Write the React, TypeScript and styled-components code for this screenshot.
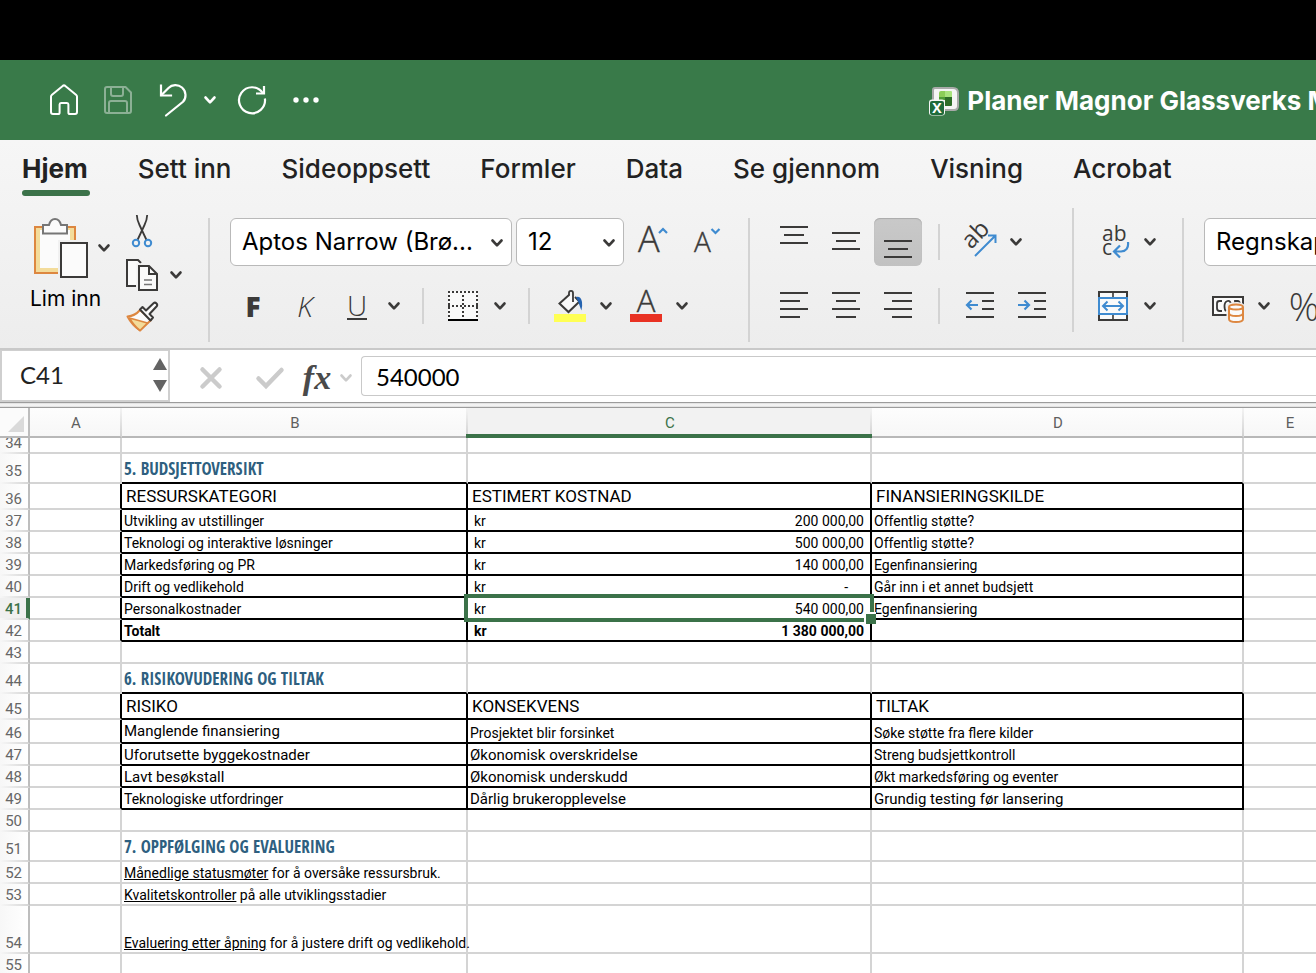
import React from "react";
import styled, { createGlobalStyle, css } from "styled-components";

const ink = "#3b3a39";
const blue = "#3f8bd0";
const orange = "#dd8740";
const green = "#3b7249";
const ui = `Inter, "Liberation Sans", sans-serif`;
const cellFont = `Roboto, "Liberation Sans", sans-serif`;

const GlobalStyle = createGlobalStyle`
  *, *::before, *::after { box-sizing: border-box; }
  body { margin: 0; background: #fff; font-family: ${ui}; color: #222; }
  button { border: 0; padding: 0; background: none; font: inherit; color: inherit; }
`;

/* ---------- window frame ---------- */

const AppWindow = styled.div`
  display: flex;
  flex-direction: column;
  height: 100vh;
  overflow: hidden;
  border-top: 60px solid #000;
`;

const TitleBar = styled.header`
  display: flex;
  flex: none;
  align-items: center;
  height: 80px;
  background: #397a49;
  color: #fff;
  overflow: hidden;
`;

const QuickAccess = styled.div`
  display: flex;
  flex: none;
  padding-left: 36px;
`;

const DocumentTitle = styled.h1`
  display: flex;
  flex: none;
  align-items: center;
  gap: 8px;
  margin: 0;
  padding: 2px 0 0 46vw;
  font-size: 26px;
  line-height: 40px;
  font-weight: 700;
  white-space: nowrap;
  svg { display: block; overflow: visible; }
`;

const IconButton = styled.button<{ $w: number; $active?: boolean }>`
  display: flex;
  flex: none;
  align-items: center;
  justify-content: center;
  width: ${(p) => p.$w}px;
  height: 48px;
  border-radius: 6px;
  svg { display: block; overflow: visible; }
  ${(p) =>
    p.$active &&
    css`
      background: linear-gradient(#c9c9c9, #c1c1c1);
      box-shadow: inset 0 1px 1px #aaa;
    `}
`;

/* ---------- ribbon ---------- */

const Ribbon = styled.div`
  flex: none;
  background: linear-gradient(#f6f6f6, #ededed);
  border-bottom: 2px solid #c9c9c9;
`;

const Tabs = styled.nav`
  display: flex;
  gap: 50px;
  padding: 13px 22px 0;
`;

const Tab = styled.button<{ $active?: boolean }>`
  padding-bottom: 5px;
  border-bottom: 6px solid transparent;
  font-size: 26px;
  line-height: 32px;
  font-weight: ${(p) => (p.$active ? 700 : 500)};
  white-space: nowrap;
  position: relative;
  &::after {
    content: "";
    position: absolute;
    left: 0;
    right: -2px;
    bottom: -6px;
    height: 6px;
    border-radius: 3px;
    background: ${(p) => (p.$active ? green : "transparent")};
  }
`;

const Tools = styled.div`
  display: flex;
  height: 152px;
  padding: 12px 0 6px;
  overflow: hidden;
`;

const Divider = styled.span<{ $top?: boolean }>`
  flex: none;
  align-self: ${(p) => (p.$top ? "flex-start" : "flex-end")};
  width: 2px;
  height: 124px;
  background: #d3d3d3;
`;

const ShortDivider = styled.span<{ $w: number }>`
  display: flex;
  flex: none;
  justify-content: center;
  width: ${(p) => p.$w}px;
  &::before {
    content: "";
    width: 2px;
    height: 36px;
    background: #d3d3d3;
  }
`;

const Clipboard = styled.div`
  display: flex;
  flex: none;
  gap: 16px;
  width: 208px;
  padding-left: 30px;
`;

const PasteColumn = styled.div`
  display: flex;
  flex-direction: column;
  gap: 6px;
  width: 80px;
  padding-top: 10px;
`;

const PasteRow = styled.div`
  display: flex;
  align-items: center;
  gap: 10px;
  padding-left: 4px;
  svg { display: block; overflow: visible; }
`;

const PasteLabel = styled.span`
  font-size: 21px;
  line-height: 30px;
  color: #000;
  white-space: nowrap;
`;

const SmallColumn = styled.div`
  display: flex;
  flex-direction: column;
  justify-content: center;
  gap: 11px;
`;

const SmallRow = styled.div`
  display: flex;
  align-items: center;
  gap: 12px;
  svg { display: block; overflow: visible; }
`;

const Group = styled.div<{ $w: number; $left: number }>`
  display: flex;
  flex: none;
  flex-direction: column;
  gap: 16px;
  width: ${(p) => p.$w}px;
  padding: 10px 0 0 ${(p) => p.$left}px;
`;

const ToolRow = styled.div<{ $gap?: number }>`
  display: flex;
  align-items: center;
  gap: ${(p) => p.$gap ?? 0}px;
  height: 48px;
`;

const Picker = styled.label<{ $w: number }>`
  position: relative;
  display: flex;
  flex: none;
  width: ${(p) => p.$w}px;
  svg {
    position: absolute;
    right: 9px;
    top: 21px;
    pointer-events: none;
  }
`;

const Select = styled.select`
  appearance: none;
  width: 100%;
  height: 48px;
  padding: 0 11px 2px;
  border: 1px solid #b9b9b9;
  border-radius: 6px;
  background: #fff;
  color: #000;
  font-family: ${ui};
  font-size: 24px;
`;

const Letter = styled.span<{ $kind: "bold" | "italic" | "underline" | "percent" }>`
  font-family: "Open Sans", sans-serif;
  font-size: 28px;
  line-height: 32px;
  font-weight: 300;
  color: ${ink};
  ${(p) => p.$kind === "bold" && css`font-weight: 800;`}
  ${(p) => p.$kind === "italic" && css`font-style: italic;`}
  ${(p) =>
    p.$kind === "underline" &&
    css`
      line-height: 26px;
      border-bottom: 2px solid ${ink};
    `}
  ${(p) => p.$kind === "percent" && css`font-size: 38px;`}
`;

/* ---------- formula bar ---------- */

const FormulaBar = styled.div`
  display: flex;
  flex: none;
  align-items: center;
  height: 52px;
  background: #fff;
`;

const NameBox = styled.div`
  display: flex;
  flex: none;
  align-items: center;
  width: 170px;
  height: 52px;
  padding-bottom: 2px;
  border: 2px solid #cfcfcf;
  border-top-width: 1px;
`;

const NameInput = styled.input`
  flex: 1;
  min-width: 0;
  height: 44px;
  padding: 0 0 0 18px;
  border: 0;
  background: none;
  font-family: Lato, sans-serif;
  font-size: 24px;
  color: #222;
`;

const Stepper = styled.div`
  display: flex;
  flex: none;
  flex-direction: column;
  gap: 10px;
  padding-right: 1px;
  svg { display: block; }
`;

const FormulaTools = styled.div`
  display: flex;
  flex: none;
  padding: 4px 3px 0 12px;
`;

const Fx = styled.span`
  font-family: "Liberation Serif", serif;
  font-style: italic;
  font-weight: 700;
  font-size: 34px;
  line-height: 36px;
  color: #4a4a4a;
`;

const FormulaInput = styled.input`
  flex: 1;
  min-width: 0;
  height: 40px;
  padding: 0 14px;
  border: 1px solid #c9c9c9;
  border-right: 0;
  border-radius: 4px 0 0 4px;
  background: #fff;
  font-family: Lato, sans-serif;
  font-size: 24px;
  color: #000;
`;

const Splitter = styled.div`
  flex: none;
  height: 6px;
  border-top: 1px solid #9c9c9c;
  border-bottom: 1px solid #9c9c9c;
  background: linear-gradient(#dcdcdc, #fafafa 50%, #dcdcdc);
`;

/* ---------- sheet ---------- */

const Sheet = styled.div`
  flex: 1;
  min-height: 0;
  overflow: hidden;
`;

const Grid = styled.table`
  width: 100%;
  min-width: 1428px;
  table-layout: fixed;
  border-collapse: separate;
  border-spacing: 0;
  font-family: ${cellFont};
  font-size: 14px;
  line-height: 18px;
  color: #000;
`;

const Col = styled.col<{ $w?: number }>`
  width: ${(p) => (p.$w ? `${p.$w}px` : "auto")};
`;

const ColumnHead = styled.th<{ $selected?: boolean }>`
  position: relative;
  height: 30px;
  padding: 2px 0 0 2px;
  border-right: 2px solid transparent;
  border-bottom: 2px solid #b8b8b8;
  background:
    linear-gradient(#f4f4f4, #d0d0d0) right / 2px 100% no-repeat border-box,
    ${(p) => (p.$selected ? "#f2f2f2" : "linear-gradient(#fdfdfd, #f7f7f7)")};
  font-size: 15px;
  font-weight: 400;
  color: ${(p) => (p.$selected ? green : "#5f5f5f")};
  ${(p) =>
    p.$selected &&
    css`
      &::after {
        content: "";
        position: absolute;
        z-index: 1;
        left: -2px;
        right: -2px;
        bottom: -2px;
        height: 4px;
        background: ${green};
      }
    `}
`;

const Corner = styled.th`
  padding: 0 4px 4px 8px;
  height: 30px;
  border-right: 2px solid #bdbdbd;
  border-bottom: 2px solid #b8b8b8;
  background: #fbfbfb;
  vertical-align: bottom;
  svg { display: block; }
`;

const SheetRow = styled.tr<{ $h: number }>`
  height: ${(p) => p.$h}px;
`;

const RowHead = styled.th<{ $selected?: boolean; $tall?: boolean }>`
  padding: 0 6px 0 0;
  border-right: 2px solid #bdbdbd;
  border-bottom: 2px solid transparent;
  background:
    linear-gradient(90deg, #f7f7f7, #d4d4d4) bottom / 100% 2px no-repeat border-box,
    ${(p) => (p.$selected ? "#f0f0f0" : "linear-gradient(90deg, #f7f7f7, #fff)")};
  font-size: 15px;
  line-height: ${(p) => (p.$tall ? 22 : 18)}px;
  font-weight: ${(p) => (p.$selected ? 500 : 400)};
  color: ${(p) => (p.$selected ? green : "#666")};
  text-align: right;
  vertical-align: bottom;
  ${(p) =>
    p.$selected &&
    css`
      border-right-color: ${green};
      box-shadow: inset -2px 0 ${green};
    `}
`;

const ClippedLabel = styled.div`
  display: flex;
  align-items: flex-end;
  justify-content: flex-end;
  height: 14px;
  overflow: hidden;
`;

type Kind = "text" | "roomy" | "title" | "head" | "money" | "total" | "tall";

const Cell = styled.td<{ $right?: boolean; $bottom?: boolean; $kind?: Kind }>`
  position: relative;
  padding: 0 0 0 2px;
  border-right: 2px solid ${(p) => (p.$right ? "#000" : "#d4d4d4")};
  border-bottom: 2px solid ${(p) => (p.$bottom ? "#000" : "#d4d4d4")};
  vertical-align: bottom;
  white-space: nowrap;
  ${(p) =>
    p.$kind === "title" &&
    css`
      font-family: "Open Sans Condensed", "Roboto Condensed", sans-serif;
      font-size: 17px;
      line-height: 26px;
      font-weight: 700;
      color: #2e5f80;
    `}
  ${(p) => p.$kind === "head" && css`padding-left: 4px; font-size: 17px; line-height: 24px;`}
  ${(p) => p.$kind === "roomy" && css`font-size: 15px;`}
  ${(p) => p.$kind === "tall" && css`font-size: 15px; line-height: 22px;`}
  ${(p) => p.$kind === "total" && css`font-weight: 700;`}
`;

const Money = styled.div<{ $dash?: boolean }>`
  display: flex;
  justify-content: space-between;
  padding: 0 ${(p) => (p.$dash ? 22 : 6)}px 0 4px;
`;

const Selection = styled.div`
  position: absolute;
  z-index: 2;
  inset: -4px -4px -4px -4px;
  border: 4px solid ${green};
  pointer-events: none;
  &::after {
    content: "";
    position: absolute;
    right: -6px;
    bottom: -6px;
    width: 12px;
    height: 12px;
    border: solid #fff;
    border-width: 2px 0 0 2px;
    background: ${green};
  }
`;

/* ---------- icons ---------- */

const Chevron = ({ color = ink, size = 12 }: { color?: string; size?: number }) => (
  <svg width={size} height="8" viewBox="0 0 12 8" fill="none" stroke={color} strokeWidth="2.6" strokeLinecap="round" strokeLinejoin="round">
    <path d="M1.5 1.5 6 6.3l4.5-4.8" />
  </svg>
);

const Lines = ({ rows }: { rows: [number, number, number][] }) => (
  <svg width="28" height="32" viewBox="0 0 28 32" stroke={ink} strokeWidth="2">
    {rows.map(([y, a, b]) => (
      <path key={y} d={`M${a} ${y}H${b}`} />
    ))}
  </svg>
);

const HomeIcon = () => (
  <svg width="28" height="30" viewBox="0 0 28 30" fill="none" stroke="#fff" strokeWidth="2" strokeLinejoin="round">
    <path d="M1 11.5Q1 10.6 2 9.7L12.7.9Q14-.1 15.3.9L26 9.7q1 .9 1 1.8V27q0 2-2 2H20q-1.600 0-1.600-1.600V19.500Q18.400 18 17 18H11Q9.600 18 9.600 19.500V27.400Q9.600 29 8 29H3Q1 29 1 27Z" />
  </svg>
);

const SaveIcon = () => (
  <svg width="28" height="28" viewBox="0 0 28 28" fill="none" stroke="#8cb095" strokeWidth="2" strokeLinejoin="round">
    <path d="M3 1H21.500L27 6.500V25q0 2-2 2H3q-2 0-2-2V3Q1 1 3 1Z" />
    <path d="M7 1V8q0 2 2 2h8q2 0 2-2V1M5 27V17q0-2 2-2H21q2 0 2 2V27" />
  </svg>
);

const UndoIcon = () => (
  <svg width="28" height="32" viewBox="0 0 28 32" fill="none" stroke="#fff" strokeWidth="2.200" strokeLinecap="square">
    <path d="M2 1.500V11.500H12" />
    <path d="M2.500 11 9.500 4C13 .5 19 .2 23 3.500c4.500 4 4.500 10.500 1 14.300L7 31.500" strokeLinecap="round" />
  </svg>
);

const RedoIcon = () => (
  <svg width="28" height="28" viewBox="0 0 28 28" fill="none" stroke="#fff" strokeWidth="2.200">
    <path d="M26.900 12.500A13 13 0 1 1 24.800 7" />
    <path d="M26 0V7.500H18" />
  </svg>
);

const DocIcon = () => (
  <svg width="28" height="28" viewBox="0 0 28 28">
    <path d="M4 1H22q5 0 5 5V19q0 4-4 4H4q-2 0-2-2V3Q2 1 4 1Z" fill="#f5f5f5" stroke="#a9aaa9" strokeWidth="2" />
    <path d="M10 4h4v6H8V6q0-2 2-2Z" fill="#8ccd58" />
    <path d="M14 4h6q1 0 1 1v5h-7Z" fill="#a9e37e" />
    <path d="M14 10h7v8q0 1-1 1h-6Z" fill="#2e6d28" />
    <path d="M8 10h6v3H8Z" fill="#4f9c37" />
    <rect x="-2" y="12.500" width="16" height="16" rx="3" fill="#f5f5f5" />
    <rect x="-1" y="14" width="14" height="14" rx="2" fill="#1f6b3b" />
    <text x="6" y="26" textAnchor="middle" fontFamily="Open Sans" fontWeight="700" fontSize="14" fill="#fff">X</text>
  </svg>
);

const PasteIcon = () => (
  <svg width="54" height="60" viewBox="0 0 54 60">
    <rect x="1" y="9" width="40" height="46" fill="#f3dc9b" stroke={orange} strokeWidth="2" />
    <rect x="6" y="12" width="30" height="38" fill="#fbfbfb" />
    <path d="M24 22H54V60H24Z" fill="#f1f1f1" />
    <path d="M9 7H15C16 3 18 1 21 1S26 3 27 7H33V15.500H9Z" fill="#fbfbfb" stroke="#767676" strokeWidth="2" />
    <rect x="27" y="25" width="26" height="34" fill="#fbfbfb" stroke={ink} strokeWidth="2" />
  </svg>
);

const CutIcon = () => (
  <svg width="32" height="32" viewBox="0 0 32 32" fill="none">
    <path d="M10.800-1Q11 4 13.500 9L20.500 24M21.200-1Q21 4 18.500 9L11.500 24" stroke={ink} strokeWidth="1.800" />
    <circle cx="10" cy="27" r="3.200" stroke={blue} strokeWidth="2" />
    <circle cx="22" cy="27" r="3.200" stroke={blue} strokeWidth="2" />
  </svg>
);

const CopyIcon = () => (
  <svg width="32" height="32" viewBox="0 0 32 32" fill="none" stroke={ink} strokeWidth="2">
    <path d="M10 27H1V1H12l3 3" fill="#fafafa" />
    <path d="M10.500 4.500H25V10H13V31h-2.500Z" fill="#f1f1f1" stroke="none" />
    <path d="M13 7H23L31 15V31H13Z" fill="#fafafa" />
    <path d="M23 7V15H31" />
    <path d="M18 21h8M18 25.500h8" stroke="#767676" strokeWidth="1.600" />
  </svg>
);

const BrushIcon = () => (
  <svg width="32" height="32" viewBox="0 0 32 32" fill="none" strokeLinejoin="round">
    <path d="M14 8Q9 14 1.500 14.500 6 23 14 28.500L25 18Z" fill="#fbfbfb" stroke={orange} strokeWidth="2" />
    <path d="M3.500 16 21.500 21 14 28.500Q8 24 3.500 16Z" fill="#f3dc9b" stroke={orange} strokeWidth="1.600" />
    <path d="M14 7.500 16.500 5 20 8.500 27.500 1.200Q29 0 30.500 1.500T30.500 4.500L23.500 12 27 15.500 24.500 18.500Z" fill="#fbfbfb" stroke={ink} strokeWidth="2" />
  </svg>
);

const FontSizeIcon = ({ up }: { up?: boolean }) => (
  <svg width="32" height="32" viewBox="0 0 32 32" fill="none">
    <text x={up ? 2 : 2} y="26" fontFamily="Open Sans" fontWeight="300" fontSize={up ? 36 : 28} fill={ink} stroke={ink} strokeWidth=".4">A</text>
    <path d={up ? "M23 7 27 3l4 4" : "M19.500 3 23.500 7l4-4"} stroke={blue} strokeWidth="2.200" />
  </svg>
);

const BordersIcon = () => (
  <svg width="30" height="30" viewBox="0 0 30 30" fill="none" stroke={ink} strokeWidth="2">
    <rect width="30" height="30" fill="#fafafa" stroke="none" />
    <path d="M0 1H30M1 4V28M29 4V28M0 15H30M15 4V28" strokeDasharray="2 2" />
    <path d="M0 29H30" stroke="#000" />
  </svg>
);

const FillIcon = () => (
  <svg width="32" height="32" viewBox="0 0 32 32" fill="none">
    <path d="M15.500 4.500 5.500 13.500 14.500 22 25.500 11.500 21 7" fill="#fafafa" stroke={ink} strokeWidth="2" />
    <path d="M15 5V3Q15 .8 17 .8T19 3V12" stroke={ink} strokeWidth="1.800" />
    <path d="M22 7q5-1 6 5 .6 4-.6 8.500Q26 17 24.500 12.500Z" fill="#2563b0" />
    <rect y="24" width="32" height="8" fill="#ffff54" />
  </svg>
);

const FontColorIcon = () => (
  <svg width="32" height="32" viewBox="0 0 32 32">
    <text x="16" y="22" textAnchor="middle" fontFamily="Open Sans" fontWeight="300" fontSize="31" fill={ink} stroke={ink} strokeWidth=".4">A</text>
    <rect y="24" width="32" height="8" fill="#e93223" />
  </svg>
);

const OrientationIcon = () => (
  <svg width="34" height="32" viewBox="0 0 34 32" fill="none">
    <text transform="translate(8 24) rotate(-45)" fontFamily="Open Sans" fontSize="24" fill={ink}>ab</text>
    <path d="M12 30 32 10M25 9.500H32.500V17" stroke={blue} strokeWidth="2" />
  </svg>
);

const IndentIcon = ({ right }: { right?: boolean }) => (
  <svg width="28" height="32" viewBox="0 0 28 32" fill="none" stroke={ink} strokeWidth="2">
    <path d="M0 3H28M16 11H28M16 19H28M0 27H28" />
    <path d={right ? "M0 15H11M6.500 10.500 11 15l-4.500 4.500" : "M12 15H1M5.500 10.500 1 15l4.500 4.500"} stroke={blue} strokeWidth="2.200" />
  </svg>
);

const WrapIcon = () => (
  <svg width="28" height="32" viewBox="0 0 28 32" fill="none">
    <text x="3" y="15" fontFamily="Open Sans" fontSize="21" fill={ink}>ab</text>
    <text x="3" y="29" fontFamily="Open Sans" fontSize="21" fill={ink}>c</text>
    <path d="M29 16Q30 25 22 25.500H15.500M21 19.500 15 25.500l6 6" stroke={blue} strokeWidth="2.200" />
  </svg>
);

const MergeIcon = () => (
  <svg width="30" height="30" viewBox="0 0 30 30" fill="none" strokeWidth="2">
    <rect x="1" y="1" width="28" height="28" stroke={ink} fill="#fafafa" />
    <path d="M15 1V7M15 23V29" stroke={ink} strokeWidth="1.600" />
    <rect x="1" y="7" width="28" height="16" fill="#fafafa" stroke={blue} />
    <path d="M5 15H25M9.500 10.500 5 15l4.500 4.500M20.500 10.500 25 15l-4.500 4.500" stroke={blue} />
  </svg>
);

const CurrencyIcon = () => (
  <svg width="32" height="32" viewBox="0 0 32 32" fill="none" strokeWidth="2">
    <rect x="1" y="7" width="30" height="18" stroke={ink} fill="#fafafa" />
    <path d="M10 11H7.500Q5 11 5 13.500V18Q5 21 7.500 21H10M14 21Q12.500 20 12.500 16T15.500 11 19 15M23 17V11h2.500Q28 11 28 15" stroke={ink} strokeWidth="1.800" />
    <path d="M14.500 14.500Q18 12 24 12T32 14.500V34H14.500Z" fill="#efefef" />
    <path d="M17 17V29Q17 32 24 32T31 29V17" fill="#fafafa" stroke={orange} />
    <ellipse cx="24" cy="17" rx="7" ry="2.600" fill="#fafafa" stroke={orange} />
    <path d="M17 23Q17 26 24 26T31 23" stroke={orange} />
  </svg>
);

const Triangle = ({ down }: { down?: boolean }) => (
  <svg width="14" height="12" viewBox="0 0 14 12" fill="#636363">
    <path d={down ? "M0 0H14L7 12Z" : "M7 0 14 12H0Z"} />
  </svg>
);

/* ---------- sheet data ---------- */

type Value = { text?: React.ReactNode; kind?: Kind; amount?: string };
type RowData = { n: number; h: number; box?: "top" | "in"; cells?: Value[] };

const t = (text: React.ReactNode, kind: Kind = "text"): Value => ({ text, kind });
const kr = (amount: string, kind: Kind = "money"): Value => ({ amount, kind });

const rows: RowData[] = [
  { n: 34, h: 16 },
  { n: 35, h: 30, box: "top", cells: [t("5. BUDSJETTOVERSIKT", "title")] },
  { n: 36, h: 26, box: "in", cells: [t("RESSURSKATEGORI", "head"), t("ESTIMERT KOSTNAD", "head"), t("FINANSIERINGSKILDE", "head")] },
  { n: 37, h: 22, box: "in", cells: [t("Utvikling av utstillinger"), kr("200 000,00"), t("Offentlig støtte?")] },
  { n: 38, h: 22, box: "in", cells: [t("Teknologi og interaktive løsninger"), kr("500 000,00"), t("Offentlig støtte?")] },
  { n: 39, h: 22, box: "in", cells: [t("Markedsføring og PR"), kr("140 000,00"), t("Egenfinansiering")] },
  { n: 40, h: 22, box: "in", cells: [t("Drift og vedlikehold"), kr("-"), t("Går inn i et annet budsjett")] },
  { n: 41, h: 22, box: "in", cells: [t("Personalkostnader"), kr("540 000,00"), t("Egenfinansiering")] },
  { n: 42, h: 22, box: "in", cells: [t("Totalt", "total"), kr("1 380 000,00", "total")] },
  { n: 43, h: 22 },
  { n: 44, h: 30, box: "top", cells: [t("6. RISIKOVUDERING OG TILTAK", "title")] },
  { n: 45, h: 26, box: "in", cells: [t("RISIKO", "head"), t("KONSEKVENS", "head"), t("TILTAK", "head")] },
  { n: 46, h: 24, box: "in", cells: [t("Manglende finansiering", "tall"), t("Prosjektet blir forsinket"), t("Søke støtte fra flere kilder")] },
  { n: 47, h: 22, box: "in", cells: [t("Uforutsette byggekostnader", "roomy"), t("Økonomisk overskridelse", "roomy"), t("Streng budsjettkontroll")] },
  { n: 48, h: 22, box: "in", cells: [t("Lavt besøkstall", "roomy"), t("Økonomisk underskudd", "roomy"), t("Økt markedsføring og eventer")] },
  { n: 49, h: 22, box: "in", cells: [t("Teknologiske utfordringer"), t("Dårlig brukeropplevelse", "roomy"), t("Grundig testing før lansering", "roomy")] },
  { n: 50, h: 22 },
  { n: 51, h: 30, cells: [t("7. OPPFØLGING OG EVALUERING", "title")] },
  { n: 52, h: 22, cells: [t(<><u>Månedlige statusmøter</u> for å oversåke ressursbruk.</>)] },
  { n: 53, h: 22, cells: [t(<><u>Kvalitetskontroller</u> på alle utviklingsstadier</>)] },
  { n: 54, h: 48, cells: [t(<><u>Evaluering etter åpning</u> for å justere drift og vedlikehold.</>)] },
  { n: 55, h: 22 },
];

const tabs = ["Hjem", "Sett inn", "Sideoppsett", "Formler", "Data", "Se gjennom", "Visning", "Acrobat"];

const More = ({ w, label }: { w: number; label: string }) => (
  <IconButton $w={w} aria-label={label}>
    <Chevron />
  </IconButton>
);

export default function App() {
  return (
    <AppWindow>
      <GlobalStyle />
      <TitleBar>
        <QuickAccess>
          <IconButton $w={56} aria-label="Hjem"><HomeIcon /></IconButton>
          <IconButton $w={52} aria-label="Lagre"><SaveIcon /></IconButton>
          <IconButton $w={58} aria-label="Angre"><UndoIcon /></IconButton>
          <IconButton $w={16} aria-label="Flere angrevalg"><Chevron color="#fff" /></IconButton>
          <IconButton $w={68} aria-label="Gjenta"><RedoIcon /></IconButton>
          <IconButton $w={40} aria-label="Mer">
            <svg width="26" height="6" viewBox="0 0 26 6" fill="#fff">
              <circle cx="3" cy="3" r="2.700" /><circle cx="13" cy="3" r="2.700" /><circle cx="23" cy="3" r="2.700" />
            </svg>
          </IconButton>
        </QuickAccess>
        <DocumentTitle><DocIcon />Planer Magnor Glassverks M</DocumentTitle>
      </TitleBar>

      <Ribbon>
        <Tabs>
          {tabs.map((name, i) => (
            <Tab key={name} $active={i === 0}>{name}</Tab>
          ))}
        </Tabs>
        <Tools>
          <Clipboard>
            <PasteColumn>
              <PasteRow>
                <button aria-label="Lim inn"><PasteIcon /></button>
                <button aria-label="Innlimingsvalg"><Chevron /></button>
              </PasteRow>
              <PasteLabel>Lim inn</PasteLabel>
            </PasteColumn>
            <SmallColumn>
              <SmallRow><button aria-label="Klipp ut"><CutIcon /></button></SmallRow>
              <SmallRow>
                <button aria-label="Kopier"><CopyIcon /></button>
                <button aria-label="Kopieringsvalg"><Chevron /></button>
              </SmallRow>
              <SmallRow><button aria-label="Kopier format"><BrushIcon /></button></SmallRow>
            </SmallColumn>
          </Clipboard>
          <Divider />

          <Group $w={538} $left={20}>
            <ToolRow $gap={4}>
              <Picker $w={282}>
                <Select aria-label="Skrift"><option>Aptos Narrow (Brø...</option></Select>
                <Chevron />
              </Picker>
              <Picker $w={108}>
                <Select aria-label="Skriftstørrelse"><option>12</option></Select>
                <Chevron />
              </Picker>
              <IconButton $w={48} aria-label="Større skrift"><FontSizeIcon up /></IconButton>
              <IconButton $w={56} aria-label="Mindre skrift"><FontSizeIcon /></IconButton>
            </ToolRow>
            <ToolRow>
              <IconButton $w={46} aria-label="Fet"><Letter $kind="bold">F</Letter></IconButton>
              <IconButton $w={58} aria-label="Kursiv"><Letter $kind="italic">K</Letter></IconButton>
              <IconButton $w={46} aria-label="Understreking"><Letter $kind="underline">U</Letter></IconButton>
              <More w={28} label="Understrekingsvalg" />
              <ShortDivider $w={30} />
              <IconButton $w={50} aria-label="Kantlinjer"><BordersIcon /></IconButton>
              <More w={24} label="Kantlinjevalg" />
              <ShortDivider $w={34} />
              <IconButton $w={48} aria-label="Fyllfarge"><FillIcon /></IconButton>
              <More w={24} label="Fyllfargevalg" />
              <IconButton $w={56} aria-label="Skriftfarge"><FontColorIcon /></IconButton>
              <More w={16} label="Skriftfargevalg" />
            </ToolRow>
          </Group>
          <Divider />

          <Group $w={322} $left={20}>
            <ToolRow $gap={4}>
              <IconButton $w={48} aria-label="Juster øverst"><Lines rows={[[1, 0, 28], [9, 4, 24], [17, 0, 28]]} /></IconButton>
              <IconButton $w={48} aria-label="Midtstill loddrett"><Lines rows={[[7, 0, 28], [15, 4, 24], [23, 0, 28]]} /></IconButton>
              <IconButton $w={48} $active aria-label="Juster nederst"><Lines rows={[[15, 0, 28], [23, 4, 24], [31, 0, 28]]} /></IconButton>
              <ShortDivider $w={26} />
              <IconButton $w={48} aria-label="Retning"><OrientationIcon /></IconButton>
              <More w={16} label="Retningsvalg" />
            </ToolRow>
            <ToolRow $gap={4}>
              <IconButton $w={48} aria-label="Venstrejuster"><Lines rows={[[3, 0, 28], [11, 0, 20], [19, 0, 28], [27, 0, 20]]} /></IconButton>
              <IconButton $w={48} aria-label="Midtstill"><Lines rows={[[3, 0, 28], [11, 4, 24], [19, 0, 28], [27, 4, 24]]} /></IconButton>
              <IconButton $w={48} aria-label="Høyrejuster"><Lines rows={[[3, 0, 28], [11, 8, 28], [19, 0, 28], [27, 8, 28]]} /></IconButton>
              <ShortDivider $w={26} />
              <IconButton $w={48} aria-label="Reduser innrykk"><IndentIcon /></IconButton>
              <IconButton $w={48} aria-label="Øk innrykk"><IndentIcon right /></IconButton>
            </ToolRow>
          </Group>
          <Divider $top />

          <Group $w={108} $left={15}>
            <ToolRow>
              <IconButton $w={48} aria-label="Bryt tekst"><WrapIcon /></IconButton>
              <More w={26} label="Tekstbrytingsvalg" />
            </ToolRow>
            <ToolRow>
              <IconButton $w={48} aria-label="Slå sammen"><MergeIcon /></IconButton>
              <More w={26} label="Sammenslåingsvalg" />
            </ToolRow>
          </Group>
          <Divider />

          <Group $w={300} $left={20}>
            <ToolRow>
              <Picker $w={260}>
                <Select aria-label="Tallformat"><option>Regnskap</option></Select>
                <Chevron />
              </Picker>
            </ToolRow>
            <ToolRow>
              <IconButton $w={48} aria-label="Valuta"><CurrencyIcon /></IconButton>
              <More w={24} label="Valutavalg" />
              <IconButton $w={56} aria-label="Prosent"><Letter $kind="percent">%</Letter></IconButton>
            </ToolRow>
          </Group>
        </Tools>
      </Ribbon>

      <FormulaBar>
        <NameBox>
          <NameInput aria-label="Navneboks" defaultValue="C41" />
          <Stepper>
            <button aria-label="Forrige"><Triangle /></button>
            <button aria-label="Neste"><Triangle down /></button>
          </Stepper>
        </NameBox>
        <FormulaTools>
          <IconButton $w={58} aria-label="Avbryt">
            <svg width="22" height="22" viewBox="0 0 22 22" stroke="#cbcbcb" strokeWidth="4.500" strokeLinecap="round"><path d="M2.500 2.500 19.500 19.500M19.500 2.500 2.500 19.500" /></svg>
          </IconButton>
          <IconButton $w={60} aria-label="Bekreft">
            <svg width="28" height="22" viewBox="0 0 28 22" fill="none" stroke="#cbcbcb" strokeWidth="4.500" strokeLinecap="round"><path d="M2.500 11.500 10 19 25.500 3" /></svg>
          </IconButton>
          <IconButton $w={34} aria-label="Sett inn funksjon"><Fx>fx</Fx></IconButton>
          <IconButton $w={24} aria-label="Funksjonsvalg"><Chevron color="#cbcbcb" size={14} /></IconButton>
        </FormulaTools>
        <FormulaInput aria-label="Formellinje" defaultValue="540000" />
      </FormulaBar>
      <Splitter />

      <Sheet>
        <Grid>
          <colgroup>
            <Col $w={30} /><Col $w={92} /><Col $w={346} /><Col $w={404} /><Col $w={372} /><Col $w={92} /><Col />
          </colgroup>
          <thead>
            <tr>
              <Corner aria-label="Merk alt">
                <svg width="16" height="16" viewBox="0 0 16 16" fill="#dadada"><path d="M16 0V16H0Z" /></svg>
              </Corner>
              {["A", "B", "C", "D", "E", "F"].map((c) => (
                <ColumnHead key={c} scope="col" $selected={c === "C"}>{c}</ColumnHead>
              ))}
            </tr>
          </thead>
          <tbody>
            {rows.map(({ n, h, box, cells = [] }) => {
              const boxed = box === "in";
              return (
                <SheetRow key={n} $h={h}>
                  <RowHead scope="row" $selected={n === 41} $tall={h === 30}>
                    {h < 20 ? <ClippedLabel>{n}</ClippedLabel> : n}
                  </RowHead>
                  <Cell $right={boxed} />
                  {[0, 1, 2].map((i) => {
                    const v = cells[i] ?? {};
                    return (
                      <Cell key={i} $kind={v.kind} $right={boxed} $bottom={!!box}>
                        {v.amount ? (
                          <Money $dash={v.amount === "-"}><span>kr</span><span>{v.amount}</span></Money>
                        ) : (
                          v.text
                        )}
                        {n === 41 && i === 1 && <Selection />}
                      </Cell>
                    );
                  })}
                  <Cell />
                  <Cell />
                </SheetRow>
              );
            })}
          </tbody>
        </Grid>
      </Sheet>
    </AppWindow>
  );
}
